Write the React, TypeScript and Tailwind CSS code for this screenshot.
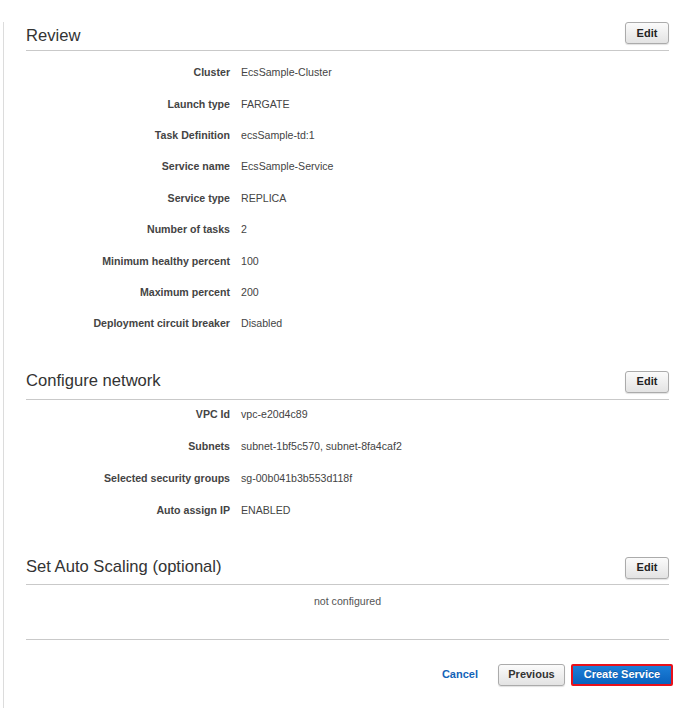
import React from "react";

const font = { fontFamily: '"Liberation Sans", Arial, sans-serif' };

const EditButton = () => (
  <button className="h-[22px] w-[44px] rounded-[3px] border border-[#ababab] bg-linear-to-b from-[#fbfbfb] to-[#e3e3e3] text-[11px] font-bold leading-none text-[#222] shadow-[0_1px_1px_rgba(0,0,0,0.12)]">
    Edit
  </button>
);

const SectionHeader = ({ title, titleClass, heightClass }: { title: string; titleClass: string; heightClass: string }) => (
  <div className={`flex items-start justify-between border-b border-[#c9c9c9] ${heightClass}`}>
    <h2 className={`text-[16.6px] leading-[20px] text-[#333] ${titleClass}`}>{title}</h2>
    <EditButton />
  </div>
);

const Row = ({ label, value, h }: { label: string; value: string; h: string }) => (
  <div className={`flex items-center text-[10.6px] leading-[13px] text-[#444] ${h}`}>
    <div className="w-[204px] shrink-0 text-right font-bold">{label}</div>
    <div className="ml-[11px]">{value}</div>
  </div>
);

const review: [string, string][] = [
  ["Cluster", "EcsSample-Cluster"],
  ["Launch type", "FARGATE"],
  ["Task Definition", "ecsSample-td:1"],
  ["Service name", "EcsSample-Service"],
  ["Service type", "REPLICA"],
  ["Number of tasks", "2"],
  ["Minimum healthy percent", "100"],
  ["Maximum percent", "200"],
  ["Deployment circuit breaker", "Disabled"],
];

const network: [string, string][] = [
  ["VPC Id", "vpc-e20d4c89"],
  ["Subnets", "subnet-1bf5c570, subnet-8fa4caf2"],
  ["Selected security groups", "sg-00b041b3b553d118f"],
  ["Auto assign IP", "ENABLED"],
];

export default function App() {
  return (
    <div className="h-[713px] w-[700px] bg-white pt-[22px]" style={font}>
      <div className="ml-[3px] border-l border-[#dcdcdc] pl-[22px] pr-[31px]">
        {/* Review */}
        <SectionHeader title="Review" titleClass="mt-[4px]" heightClass="h-[29px]" />
        <div className="pt-[6px]">
          {review.map(([l, v]) => (
            <Row key={l} label={l} value={v} h="h-[31.4px]" />
          ))}
        </div>

        {/* Configure network */}
        <div className="mt-[31px]">
          <SectionHeader title="Configure network" titleClass="mt-0" heightClass="h-[29px]" />
          <div className="flex flex-col gap-[4px] pt-[1px]">
            {network.map(([l, v]) => (
              <Row key={l} label={l} value={v} h="h-[28px]" />
            ))}
          </div>
        </div>

        {/* Auto scaling */}
        <div className="mt-[32px]">
          <SectionHeader title="Set Auto Scaling (optional)" titleClass="mt-0" heightClass="h-[28px]" />
          <div className="pt-[10px] text-center text-[10.6px] leading-[13px] text-[#555]">not configured</div>
        </div>

        <div className="mt-[31px] border-t border-[#c9c9c9] pt-[24px] pb-[22px]">
          <div className="-mr-[4px] flex items-center justify-end">
            <a className="text-[11px] font-bold text-[#1363b8]" href="#">
              Cancel
            </a>
            <button className="ml-[20px] h-[22px] w-[67px] rounded-[3px] border border-[#ababab] bg-linear-to-b from-[#fbfbfb] to-[#e3e3e3] text-[11px] font-bold leading-none text-[#333] shadow-[0_1px_1px_rgba(0,0,0,0.12)]">
              Previous
            </button>
            <button className="ml-[6px] h-[22px] w-[102px] rounded-[2px] border-2 border-[#e8111b] bg-linear-to-b from-[#1c7fd8] to-[#0a62bd] text-[11px] font-bold leading-none text-white [text-shadow:0_-1px_0_rgba(0,0,0,0.25)]">
              Create Service
            </button>
          </div>
        </div>
      </div>
    </div>
  );
}
